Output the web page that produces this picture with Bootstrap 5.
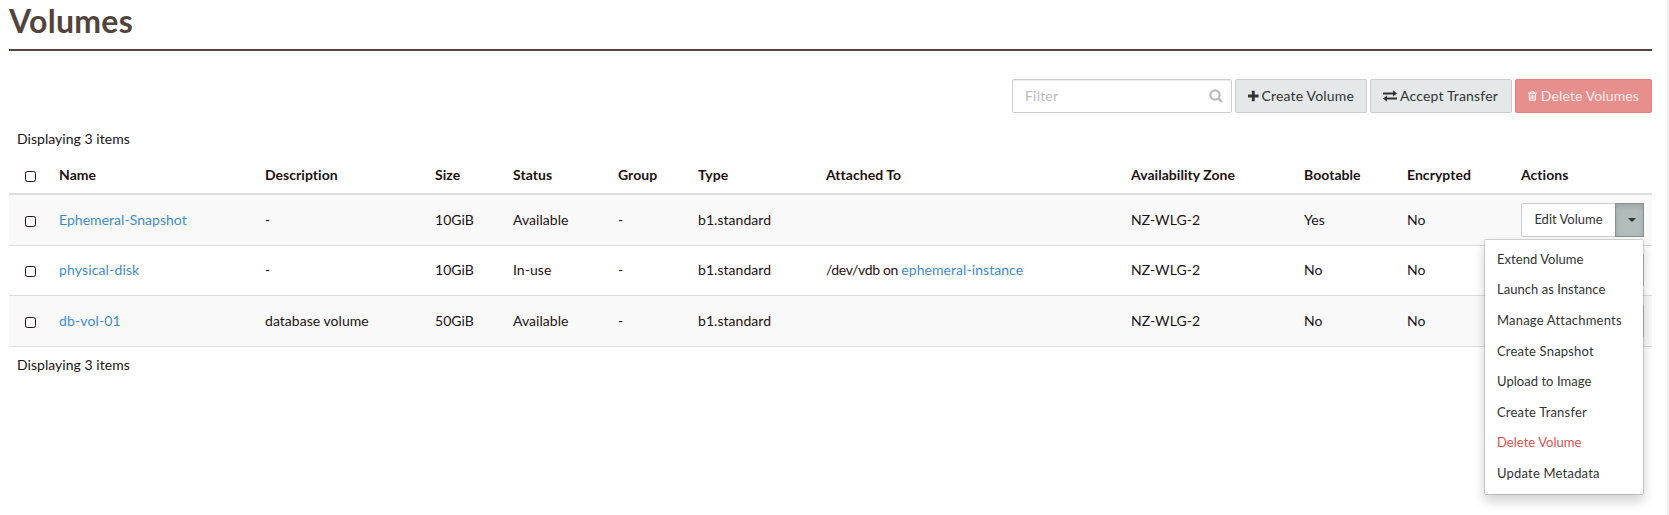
<!DOCTYPE html>
<html lang="en">
<head>
<meta charset="utf-8">
<title>Volumes</title>
<link href="https://cdn.jsdelivr.net/npm/bootstrap@5.3.0/dist/css/bootstrap.min.css" rel="stylesheet">
<style>
body{font-family:Lato,sans-serif;font-size:14px;line-height:20px;letter-spacing:.04px;color:#1d1114;background:#fff;height:515px;overflow:hidden;border-right:2px solid #f0f0f0}
a{color:#428bca;text-decoration:none}
.page{padding:0 15px 0 9px}
.page-title{font-size:32px;line-height:36px;letter-spacing:.3px;font-weight:700;color:#52443c;padding:3px 0 10px;margin:0 0 28px;border-bottom:2px solid #52443c}
.tools{height:34px;gap:3px;margin-bottom:16px}
.tools .btn,.acts .btn{font-size:14px;line-height:20px;height:34px;padding:6px 12px;border-radius:2px;white-space:nowrap;color:#333}
.tools .btn{display:flex;align-items:center;gap:3px;letter-spacing:.17px}
.tools .w1{width:132px}.tools .w2{width:142px}.tools .w3{width:137px}
.btn-soft,.btn-soft:hover{background:#e4e8e8;border-color:#ccc}
.tools .btn-del{background:#e78f8c;border-color:#e37f7c;color:#fbeceb;gap:4px;letter-spacing:.12px}
.filter{width:220px}
.filter .form-control{height:34px;font-size:14px;line-height:20px;padding:5px 12px 7px;letter-spacing:.2px;border:1px solid #ccc;border-radius:2px;box-shadow:inset 0 1px 1px rgba(0,0,0,.075)}
.filter .form-control::placeholder{color:#bbb}
.filter svg{position:absolute;right:9px;top:10px}
.count{padding:0 8px;line-height:20px}
.vols{table-layout:fixed;width:1643px;margin:0 0 8px;color:inherit;border-color:#ddd}
.vols th,.vols td{padding:0 8px;vertical-align:middle;white-space:nowrap;box-shadow:none!important;color:#1d1114!important}
.vols thead th{height:45px;padding-top:7px;border-bottom:2px solid #ddd}
.vols tbody td{border-bottom:1px solid #ddd}
.vols tbody tr{height:51px}
.vols tbody tr.r2{height:50px}
.vols tbody tr:nth-child(odd) td{background:#f9f9f9}
.wide{letter-spacing:.14px}
.vols .dev{letter-spacing:-.34px}
.vols .dev a{letter-spacing:.06px}
.box{display:block;width:11px;height:11px;border:1px solid #1b1015;border-radius:2.5px;background:#fff;margin:3px 0 0 8px}
.acts{position:relative;width:123px}
.acts .btn{background:#fff;border:1px solid #ccc;font-size:13px;padding:5px 11px 7px}
.acts .btn:first-child{width:95px;flex:none}
.acts .btn.tog{width:29px;flex:none;padding:0 0 0 4px;margin-left:-1px;display:flex;align-items:center;justify-content:center}
.acts .tog.open{background:#b1bcbd;border-color:#8c9091;box-shadow:inset 0 3px 5px rgba(0,0,0,.125)}
.tri{width:0;height:0;border:4px solid transparent;border-top-color:#333;border-bottom:0}
.acts .dropdown-menu{top:36px;right:0;left:auto;width:160px;min-width:0;height:256px;padding:4px 0;border:1px solid rgba(0,0,0,.15);background-clip:padding-box;border-radius:2px;box-shadow:0 6px 12px rgba(0,0,0,.175);font-size:13px}
.acts .dropdown-item{padding:6px 12px;line-height:18.6px;color:#333}
.acts .dropdown-item.wide{letter-spacing:.2px}
.acts .dropdown-item.del{color:#d9534f}
</style>
</head>
<body>
<main class="page">
<h1 class="page-title">Volumes</h1>
<div class="tools d-flex justify-content-end">
<div class="filter position-relative"><input class="form-control" placeholder="Filter"><svg width="14" height="14" viewBox="0 0 14 14" fill="none" stroke="#bbb"><circle cx="6" cy="6" r="4.7" stroke-width="2.2"/><path d="M9.6 9.6l2.6 2.6" stroke-width="2.6" stroke-linecap="round"/></svg></div>
<button class="btn btn-soft w1"><svg width="11" height="12" viewBox="0 0 11 12"><path d="M4 .5h3v4h4v3H7v4H4v-4H0v-3h4z" fill="#333"/></svg>Create Volume</button>
<button class="btn btn-soft w2"><svg width="14" height="12" viewBox="0 0 14 12" fill="#333"><path d="M0 2.5h10V.3L14 3.5 10 6.6V4.4H0zM14 7.6H4V5.4L0 8.6l4 3.1V9.5h10z"/></svg>Accept Transfer</button>
<button class="btn btn-del w3"><svg width="11" height="12" viewBox="0 0 11 12" fill="none" stroke="#fff"><path d="M0 2.5h11" stroke-width="1.3"/><path d="M3.5 2.3V.6h4v1.7M1.6 3v8.3h7.8V3M3.6 4.5v5.8M5.5 4.5v5.8M7.4 4.5v5.8" stroke-width="1.15"/></svg>Delete Volumes</button>
</div>
<div class="count">Displaying 3 items</div>
<table class="table vols">
<colgroup><col style="width:42px"><col style="width:206px"><col style="width:170px"><col style="width:78px"><col style="width:105px"><col style="width:80px"><col style="width:128px"><col style="width:305px"><col style="width:173px"><col style="width:103px"><col style="width:114px"><col style="width:139px"></colgroup>
<thead><tr><th><span class="box"></span></th><th>Name</th><th>Description</th><th>Size</th><th>Status</th><th>Group</th><th>Type</th><th>Attached To</th><th>Availability Zone</th><th>Bootable</th><th>Encrypted</th><th>Actions</th></tr></thead>
<tbody>
<tr><td><span class="box"></span></td><td><a href="#">Ephemeral-Snapshot</a></td><td>-</td><td>10GiB</td><td>Available</td><td>-</td><td>b1.standard</td><td></td><td>NZ-WLG-2</td><td>Yes</td><td>No</td>
<td><div class="acts btn-group"><button class="btn">Edit Volume</button><button class="btn tog open"><span class="tri"></span></button>
<div class="dropdown-menu show"><a class="dropdown-item" href="#">Extend Volume</a><a class="dropdown-item" href="#">Launch as Instance</a><a class="dropdown-item wide" href="#">Manage Attachments</a><a class="dropdown-item wide" href="#">Create Snapshot</a><a class="dropdown-item" href="#">Upload to Image</a><a class="dropdown-item wide" href="#">Create Transfer</a><a class="dropdown-item del" href="#">Delete Volume</a><a class="dropdown-item wide" href="#">Update Metadata</a></div></div></td></tr>
<tr class="r2"><td><span class="box"></span></td><td><a class="wide" href="#">physical-disk</a></td><td>-</td><td>10GiB</td><td>In-use</td><td>-</td><td>b1.standard</td><td class="dev">/dev/vdb on <a href="#">ephemeral-instance</a></td><td>NZ-WLG-2</td><td>No</td><td>No</td><td><div class="acts btn-group"><button class="btn" aria-label="Edit"></button><button class="btn tog" aria-label="More"></button></div></td></tr>
<tr><td><span class="box"></span></td><td><a class="wide" href="#">db-vol-01</a></td><td>database volume</td><td>50GiB</td><td>Available</td><td>-</td><td>b1.standard</td><td></td><td>NZ-WLG-2</td><td>No</td><td>No</td><td><div class="acts btn-group"><button class="btn" aria-label="Edit"></button><button class="btn tog" aria-label="More"></button></div></td></tr>
</tbody>
</table>
<div class="count">Displaying 3 items</div>
</main>
<script src="https://cdn.jsdelivr.net/npm/bootstrap@5.3.0/dist/js/bootstrap.bundle.min.js"></script>
</body>
</html>
